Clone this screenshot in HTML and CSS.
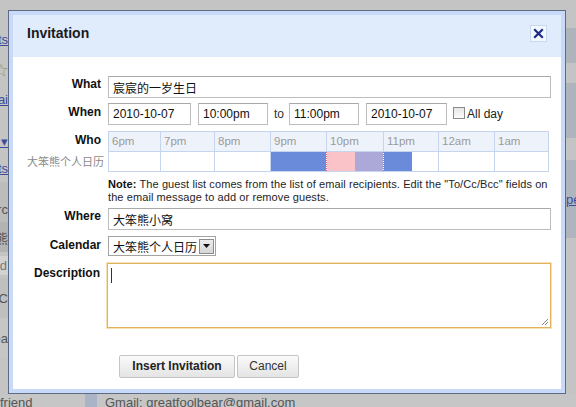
FILE: index.html
```html
<!DOCTYPE html>
<html>
<head>
<meta charset="utf-8">
<title>Invitation</title>
<link rel="stylesheet" href="styles.css">
</head>
<body>
<div class="page">
  <div class="bg-top"></div>

  <div class="bg-left">
    <div class="lt lt-a"><span class="lnk">Contacts</span></div>
    <div class="lt lt-b"><span class="star">☆</span></div>
    <div class="lt lt-c"><span class="lnk">Gmai</span></div>
    <div class="lt lt-d"><span class="lnk">More ▾</span></div>
    <div class="lt lt-e"><span class="lnk">Contacts</span></div>
    <div class="lt lt-f"><span>Circ</span></div>
    <div class="lt lt-g"><span>大笨熊</span></div>
    <div class="lt lt-h"><span class="boxed">Find</span></div>
    <div class="lt lt-i"><span>C</span></div>
    <div class="lt lt-j"><span>Sea</span></div>
  </div>

  <div class="dialog">
    <div class="dlg-title">
      <span class="dlg-title-text">Invitation</span>
      <span class="close-btn">
        <svg width="11" height="11" viewBox="0 0 11 11"><path d="M2 2 L9 9 M9 2 L2 9" stroke="#1b2a86" stroke-width="2.2" stroke-linecap="square" fill="none"/></svg>
      </span>
    </div>
    <div class="dlg-body">
      <div class="row row-what">
        <div class="lbl">What</div>
        <input class="field wide" type="text" value="宸宸的一岁生日">
      </div>
      <div class="row row-when">
        <div class="lbl">When</div>
        <div class="when-fields">
          <input class="field date1" type="text" value="2010-10-07">
          <input class="field time1" type="text" value="10:00pm">
          <span class="to">to</span>
          <input class="field time2" type="text" value="11:00pm">
          <input class="field date2" type="text" value="2010-10-07">
          <span class="chk"></span>
          <span class="allday">All day</span>
        </div>
      </div>
      <div class="row row-who-head">
        <div class="lbl">Who</div>
        <div class="tl tl-head">
          <div class="tc">6pm</div>
          <div class="tc">7pm</div>
          <div class="tc">8pm</div>
          <div class="tc">9pm</div>
          <div class="tc">10pm</div>
          <div class="tc">11pm</div>
          <div class="tc">12am</div>
          <div class="tc last">1am</div>
        </div>
      </div>
      <div class="row row-who-body">
        <div class="lbl cal-name">大笨熊个人日历</div>
        <div class="tl tl-body">
          <div class="tc"></div>
          <div class="tc"></div>
          <div class="tc"></div>
          <div class="tc busy"></div>
          <div class="tc split"><span class="ev-pink"></span><span class="ev-lav"></span></div>
          <div class="tc part"><span class="busy-half"></span></div>
          <div class="tc"></div>
          <div class="tc last"></div>
        </div>
      </div>
      <div class="row row-note">
        <div class="lbl"></div>
        <div class="note"><b>Note:</b> The guest list comes from the list of email recipients. Edit the "To/Cc/Bcc" fields on<br>the email message to add or remove guests.</div>
      </div>
      <div class="row row-where">
        <div class="lbl">Where</div>
        <input class="field wide" type="text" value="大笨熊小窝">
      </div>
      <div class="row row-cal">
        <div class="lbl">Calendar</div>
        <div class="select">
          <span class="select-text">大笨熊个人日历</span>
          <span class="select-btn"><svg width="7" height="4" viewBox="0 0 7 4"><path d="M0 0 H7 L3.5 4 Z" fill="#111"/></svg></span>
        </div>
      </div>
      <div class="row row-desc">
        <div class="lbl">Description</div>
        <div class="textarea">
          <span class="caret"></span>
          <svg class="grip" width="9" height="9" viewBox="0 0 9 9"><path d="M8 2 L2 8 M8 5 L5 8" stroke="#888" stroke-width="1" fill="none"/></svg>
        </div>
      </div>
      <div class="buttons">
        <span class="btn btn-primary">Insert Invitation</span>
        <span class="btn">Cancel</span>
      </div>
    </div>
  </div>

  <div class="bg-right">
    <div class="rb rb-1"></div>
    <div class="rb rb-2"></div>
    <div class="rb rb-3"></div>
    <div class="rb rb-4"></div>
    <div class="rb rb-5"></div>
    <div class="rb rb-6"><span class="lnk">pe</span></div>
    <div class="rb rb-7"></div>
  </div>

  <div class="bg-bottom">
    <div class="bb-left">friend</div>
    <div class="bb-stripe"></div>
    <div class="bb-text">Gmail: greatfoolbear@gmail.com</div>
  </div>
</div>
</body>
</html>
```
FILE: styles.css
```css
* { box-sizing: border-box; }
html, body { margin: 0; padding: 0; }
body {
  background: #c2c2c2;
  font-family: "Liberation Sans", Arial, "Noto Sans CJK SC", sans-serif;
  font-size: 12px;
  color: #222;
}
.page {
  width: 576px;
  height: 407px;
  overflow: hidden;
  display: grid;
  grid-template-columns: 8px 558px 10px;
  grid-template-rows: 10px 384px 13px;
  background: #c2c2c2;
}
.bg-top { grid-column: 1 / 4; background: #c4c4c4; }

/* left background strip */
.bg-left {
  display: flex;
  flex-direction: column;
  overflow: hidden;
  background: #c4c4c4;
  font-size: 13px;
  color: #555;
}
.lt {
  display: flex;
  justify-content: flex-end;
  align-items: center;
  white-space: nowrap;
  overflow: hidden;
}
.lnk { color: #3c4c9c; text-decoration: underline; }
.star { color: #9a9a6a; font-size: 14px; }
.lt-a { height: 44px; padding-top: 14px; }
.lt-b { height: 30px; }
.lt-c { height: 30px; }
.lt-d { height: 40px; padding-top: 14px; }
.lt-e { height: 28px; }
.lt-f { height: 40px; padding-top: 14px; background: #bcbcbc; }
.lt-g { height: 30px; background: #b3b3b3; }
.lt-h { height: 26px; background: #c4c4c4; }
.boxed { background: #d2d2d2; color: #777; padding: 2px 1px; }
.lt-i { height: 40px; background: #bfbfbf; }
.lt-j { height: 40px; background: #c6c6c6; }

/* right background strip */
.bg-right { display: flex; flex-direction: column; overflow: hidden; font-size: 13px; }
.rb { display: flex; align-items: center; overflow: hidden; white-space: nowrap; }
.rb-1 { height: 18px; background: #c4c4c4; }
.rb-2 { height: 35px; background: #aeb3bc; }
.rb-3 { height: 20px; background: #c4c4c4; }
.rb-4 { height: 55px; background: #aeb3bc; }
.rb-5 { height: 22px; background: #c4c4c4; }
.rb-6 { height: 78px; background: #b0b4bc; }
.rb-7 { flex: 1; background: #c4c4c4; }

/* bottom background strip */
.bg-bottom {
  grid-column: 1 / 4;
  display: flex;
  background: #c6c6c6;
  color: #555;
  font-size: 13px;
  line-height: 15px;
  overflow: hidden;
}
.bb-left { width: 85px; padding-top: 1px; }
.bb-stripe { width: 12px; background: #aab4c6; }
.bb-text { padding-left: 8px; padding-top: 1px; }

/* dialog */
.dialog {
  border: 1px solid #5d6c84;
  background: #c8daf7;
  padding: 4px;
  display: flex;
  flex-direction: column;
}
.dlg-title {
  height: 42px;
  background: #e0ebfc;
  display: flex;
  justify-content: space-between;
  align-items: flex-start;
  padding: 10px 14px 0 14px;
}
.dlg-title-text {
  font-size: 14px;
  font-weight: bold;
  line-height: 17px;
  color: #1a1a1a;
}
.close-btn {
  width: 17px;
  height: 17px;
  background: #f3f7fe;
  border: 1px solid #c9d7ef;
  display: flex;
  align-items: center;
  justify-content: center;
}
.dlg-body {
  flex: 1;
  background: #fff;
  padding: 19px 10px 0 0;
}

.row { display: flex; align-items: flex-start; }
.lbl {
  width: 95px;
  flex: none;
  padding-right: 7px;
  text-align: right;
  font-weight: bold;
  line-height: 14px;
  padding-top: 1px;
  color: #111;
}
.field {
  height: 22px;
  border: 1px solid #bdbdbd;
  border-top-color: #a9a9a9;
  padding: 0 4px;
  font-family: "Liberation Sans", Arial, "Noto Sans CJK SC", sans-serif;
  font-size: 12px;
  color: #111;
  background: #fff;
  outline: none;
  margin: 0;
}
.wide { width: 443px; }
.row-when { margin-top: 5px; }
.row-when .lbl { padding-top: 2px; }
.when-fields { display: flex; align-items: center; }
.date1 { width: 83px; }
.time1 { width: 70px; margin-left: 7px; }
.to { margin-left: 6px; width: 15px; color: #333; }
.time2 { width: 70px; }
.date2 { width: 81px; margin-left: 7px; }
.chk {
  width: 12px;
  height: 12px;
  margin-left: 6px;
  border: 1px solid #8a8a8a;
  background: linear-gradient(#e6e6e6, #fbfbfb);
  margin-top: -2px;
}
.allday { margin-left: 2px; font-size: 12px; color: #222; }

.row-who-head { margin-top: 6px; }
.row-who-head .lbl { padding-top: 2px; }
.tl {
  display: grid;
  grid-template-columns: 51px 54px 56px 56px 57px 55px 56px 56px;
  width: 441px;
  border-left: 1px solid #c6d5ee;
  border-right: 1px solid #c6d5ee;
}
.tl-head {
  height: 20px;
  background: #eef3fb;
  border-top: 1px solid #c6d5ee;
}
.tl-body {
  height: 21px;
  border-top: 1px solid #c6d5ee;
  border-bottom: 1px solid #c6d5ee;
}
.tc {
  border-left: 1px solid #c6d5ee;
  font-size: 11.5px;
  color: #9a9a9a;
  padding-left: 3px;
  line-height: 18px;
  display: flex;
}
.tc:first-child { border-left: none; }
.tl-body .tc { padding-left: 0; }
.tl-body .busy { background: #6a8bda; }
.tl-body .split { border-left: 1px dotted #e2667a; }
.ev-pink { flex: 1; background: #f9c3c7; }
.ev-lav { flex: 1; background: #aca8d7; }
.tl-body .part { border-left: 1px dotted #e2667a; }
.busy-half { width: 28px; background: #6a8bda; }
.cal-name {
  font-weight: normal;
  color: #8a8a8a;
  font-size: 11px;
  padding-right: 4px;
  line-height: 20px;
  padding-top: 0;
  white-space: nowrap;
  font-family: "Noto Sans CJK SC", sans-serif;
}

.row-note { margin-top: 6px; }
.note {
  font-size: 11px;
  letter-spacing: 0.09px;
  line-height: 13px;
  color: #1e1e1e;
  white-space: nowrap;
}
.note b { color: #111; }

.row-where { margin-top: 4px; }
.row-where .lbl { padding-top: 1px; }

.row-cal { margin-top: 6px; }
.row-cal .lbl { padding-top: 2px; }
.select {
  width: 108px;
  height: 20px;
  border: 1px solid #a3a3a3;
  display: flex;
  align-items: center;
  padding-left: 4px;
  justify-content: space-between;
  padding-right: 1px;
}
.select-text { font-size: 12px; color: #111; }
.select-btn {
  width: 15px;
  height: 15px;
  background: linear-gradient(#ececec, #d6d6d6);
  border: 1px solid #8c8c8c;
  display: flex;
  align-items: center;
  justify-content: center;
}

.row-desc { margin-top: 7px; }
.row-desc .lbl { padding-top: 3px; width: 94px; }
.textarea {
  width: 444px;
  height: 65px;
  border: 1px solid #e0b25e;
  box-shadow: 0 0 0 1px #f7e2b6;
  position: relative;
  padding: 4px 0 0 3px;
}
.caret {
  display: block;
  width: 1px;
  height: 15px;
  background: #333;
}
.grip { position: absolute; right: 1px; bottom: 1px; }

.buttons {
  display: flex;
  gap: 2px;
  margin-top: 27px;
  padding-left: 106px;
}
.btn {
  height: 23px;
  border: 1px solid #c4c4c4;
  border-radius: 2px;
  background: linear-gradient(#fafafa, #e4e4e4);
  font-size: 12px;
  color: #333;
  line-height: 21px;
  padding: 0 13px;
}
.btn-primary { font-weight: bold; color: #222; width: 116px; text-align: center; padding: 0; }
.btn:not(.btn-primary) { width: 62px; text-align: center; padding: 0; }
```
